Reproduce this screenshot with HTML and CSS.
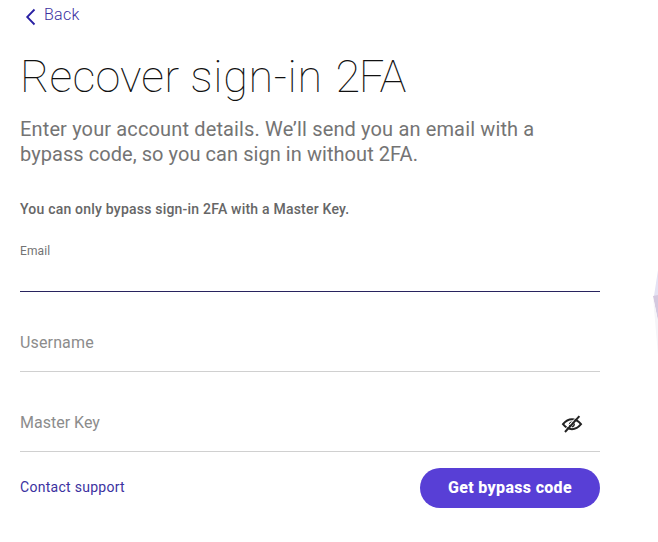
FILE: index.html
```
<!DOCTYPE html>
<html lang="en">
<head>
<meta charset="utf-8">
<title>Recover sign-in 2FA</title>
<link rel="stylesheet" href="styles.css">
</head>
<body>
<main class="panel">
  <a class="back"><svg class="chevron" width="12" height="18" viewBox="0 0 12 18"><path d="M9.5 1.5L2.2 9l7.3 7.5"/></svg><span>Back</span></a>
  <h1>Recover <span class="sign">sign-in</span> <span class="tfa">2FA</span></h1>
  <p class="intro"><span class="line-one">Enter your account details. We’ll send you an email with a</span><br><span class="line-two">bypass code, so you can sign in without 2FA.</span></p>
  <p class="note">You can only bypass sign-in 2FA with a Master Key.</p>
  <form>
    <div class="field active"><label>Email</label></div>
    <div class="field"><label class="username">Username</label></div>
    <div class="field"><label>Master Key</label>
      <svg class="eye" width="22" height="18" viewBox="0 0 22 18"><path d="M2 9.2Q6 4.2 11 4.2T20 9.2Q16 14.2 11 14.2T2 9.2Z"/><path d="M8.6 11.2Q7.8 7 11.5 6.8M13.3 8.5Q13.5 11.2 10.8 11.8" stroke-width="1.3"/><path class="gap" d="M3.2 15.4L16.6 .7"/><path d="M4 17L18.4 1.2"/></svg>
    </div>
    <div class="actions"><a class="support">Contact support</a><button type="button">Get bypass code</button></div>
  </form>
</main>
<svg class="crystal" width="5" height="86" viewBox="0 0 5 86"><path fill="#e4e2f3" d="M5 0L1 26l4 1Z"/><path fill="#d4c9df" d="M0 26l5-1v26Z"/><path fill="#f5f4f8" d="M0 27l5 24v34Z"/></svg>
</body>
</html>
```
FILE: styles.css
```
* { box-sizing: border-box; }
body {
  margin: 0;
  height: 542px;
  overflow: hidden;
  position: relative;
  background: #fff;
  color: #747474;
  font-family: Roboto, "Liberation Sans", sans-serif;
}
.panel { width: 580px; margin-left: 20px; }
.back {
  display: flex;
  height: 34px;
  padding-left: 5px;
  color: #3a309f;
  font-size: 16px;
  font-weight: 300;
  line-height: 30px;
}
.back span { margin-left: 7px; letter-spacing: .25px; }
.chevron { margin-top: 8px; fill: none; stroke: #2920a3; stroke-width: 1.8; }
h1 {
  margin: 0;
  height: 83px;
  color: #111;
  font-size: 45px;
  font-weight: 100;
  line-height: 85px;
  letter-spacing: .15px;
  white-space: nowrap;
}
.sign { letter-spacing: .6px; }
.tfa { margin-left: 1.8px; letter-spacing: -1.3px; }
.intro { margin: 0; height: 81px; font-size: 20px; line-height: 25px; white-space: nowrap; }
.line-one { letter-spacing: .14px; }
.line-two { letter-spacing: .06px; }
.note { margin: 0; height: 34px; font-size: 14px; font-weight: 500; line-height: 22px; letter-spacing: .21px; color: #666; }
.field {
  display: flex;
  justify-content: space-between;
  height: 80px;
  border-bottom: 1px solid #d0d0d0;
  padding-top: 40px;
  font-size: 16px;
  line-height: 22px;
  color: #8c8c8c;
}
.username { letter-spacing: .15px; }
.active {
  height: 60px;
  padding-top: 8px;
  border-color: #28235e;
  font-size: 12px;
  letter-spacing: .1px;
  color: #737373;
}
.eye { margin: 3px 17px 0 0; fill: none; stroke: #222; stroke-width: 2; }
.gap { stroke: #fff; stroke-width: 1; }
.actions { display: flex; justify-content: space-between; padding-top: 16px; }
.support { color: #3b319f; font-size: 14px; line-height: 39px; letter-spacing: .28px; }
button {
  width: 180px;
  height: 40px;
  padding: 0 0 2px;
  border: 0;
  border-radius: 20px;
  background: #583fd6;
  color: #fff;
  font: 800 16px Roboto, sans-serif;
  letter-spacing: .32px;
}
.crystal { position: absolute; right: 0; top: 270px; }
```
